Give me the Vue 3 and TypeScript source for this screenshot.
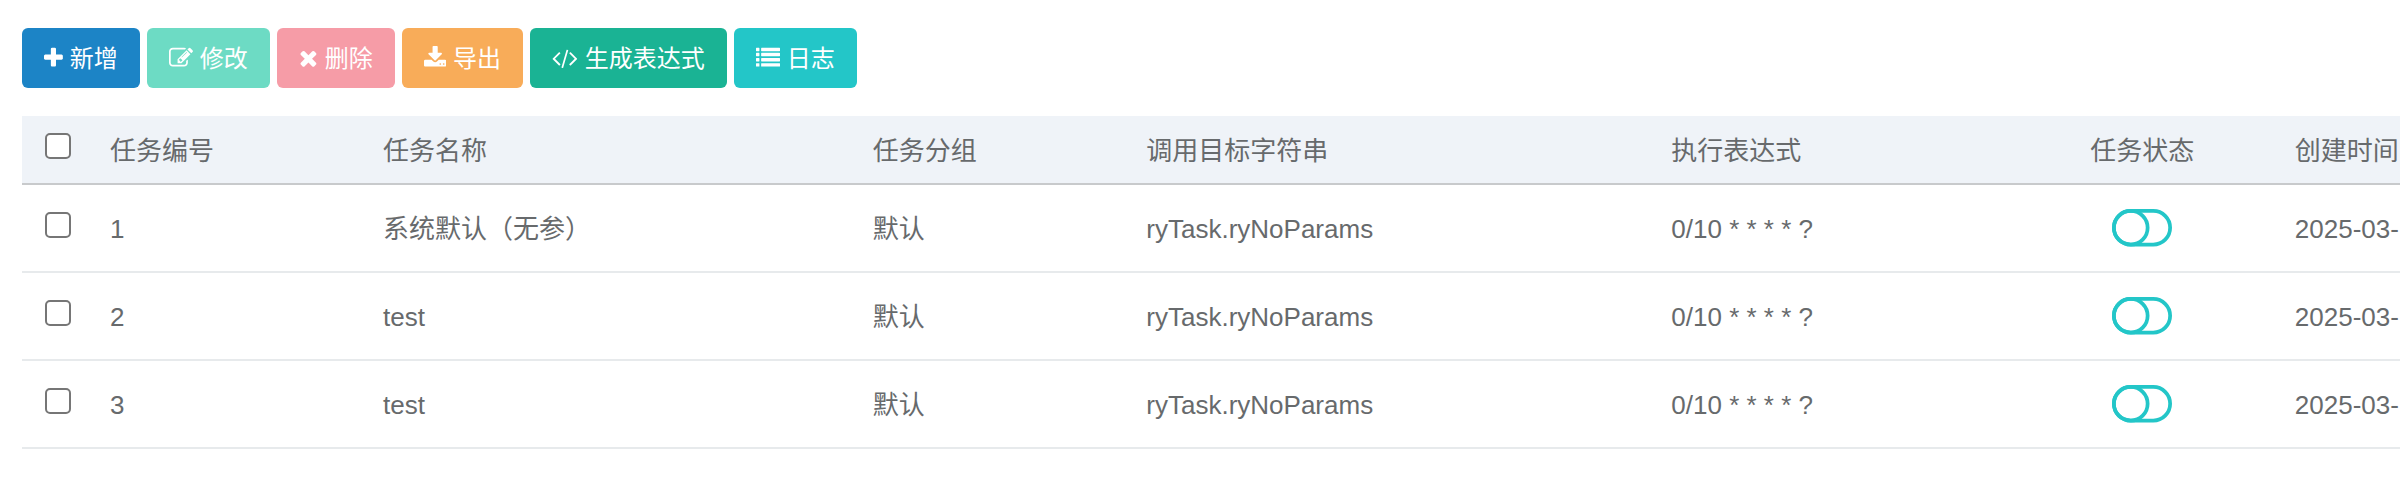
<script setup lang="ts">
import { ref } from 'vue'

interface Action {
  label: string
  tone: string
  viewBox: string
  path: string
}

interface Task {
  id: number
  name: string
  group: string
  target: string
  cron: string
  created: string
  enabled: boolean
}

const actions: Action[] = [
  {
    label: '新增',
    tone: 'primary',
    viewBox: '192 0 1408 1792',
    path: 'M1600 736v192q0 40-28 68t-68 28h-416v416q0 40-28 68t-68 28h-192q-40 0-68-28t-28-68v-416h-416q-40 0-68-28t-28-68v-192q0-40 28-68t68-28h416v-416q0-40 28-68t68-28h192q40 0 68 28t28 68v416h416q40 0 68 28t28 68z',
  },
  {
    label: '修改',
    tone: 'edit',
    viewBox: '0 0 1792 1792',
    path: 'M888 1184l116-116-152-152-116 116v56h96v96h56zm440-720q-16-16-33 1l-350 350q-17 17-1 33t33-1l350-350q17-17 1-33zm80 594v190q0 119-84.5 203.5t-203.5 84.5h-832q-119 0-203.5-84.5t-84.5-203.5v-832q0-119 84.5-203.5t203.5-84.5h832q63 0 117 25 15 7 18 23 3 17-9 29l-49 49q-14 14-32 8-23-6-45-6h-832q-66 0-113 47t-47 113v832q0 66 47 113t113 47h832q66 0 113-47t47-113v-126q0-13 9-22l64-64q15-15 35-7t20 29zm-96-738l288 288-672 672h-288v-288zm444 132l-92 92-288-288 92-92q28-28 68-28t68 28l152 152q28 28 28 68t-28 68z',
  },
  {
    label: '删除',
    tone: 'remove',
    viewBox: '192 0 1408 1792',
    path: 'M1490 1322q0 40-28 68l-136 136q-28 28-68 28t-68-28l-294-294-294 294q-28 28-68 28t-68-28l-136-136q-28-28-28-68t28-68l294-294-294-294q-28-28-28-68t28-68l136-136q28-28 68-28t68 28l294 294 294-294q28-28 68-28t68 28l136 136q28 28 28 68t-28 68l-294 294 294 294q28 28 28 68z',
  },
  {
    label: '导出',
    tone: 'export',
    viewBox: '64 0 1664 1792',
    path: 'M1344 1344q0-26-19-45t-45-19-45 19-19 45 19 45 45 19 45-19 19-45zm256 0q0-26-19-45t-45-19-45 19-19 45 19 45 45 19 45-19 19-45zm128-224v320q0 40-28 68t-68 28h-1472q-40 0-68-28t-28-68v-320q0-40 28-68t68-28h465l135 136q58 56 136 56t136-56l136-136h464q40 0 68 28t28 68zm-325-569q17 41-14 70l-448 448q-18 19-45 19t-45-19l-448-448q-31-29-14-70 17-39 59-39h256v-448q0-26 19-45t45-19h256q26 0 45 19t19 45v448h256q42 0 59 39z',
  },
  {
    label: '生成表达式',
    tone: 'cron',
    viewBox: '-64 0 1920 1792',
    path: 'M553 1399l-50 50q-10 10-23 10t-23-10l-466-466q-10-10-10-23t10-23l466-466q10-10 23-10t23 10l50 50q10 10 10 23t-10 23l-393 393 393 393q10 10 10 23t-10 23zm591-1067l-373 1291q-4 13-15.5 19.5t-23.5 2.5l-62-17q-13-4-19.5-15.5t-2.5-24.5l373-1291q4-13 15.5-19.5t23.5-2.5l62 17q13 4 19.5 15.5t2.5 24.5zm657 651l-466 466q-10 10-23 10t-23-10l-50-50q-10-10-10-23t10-23l393-393-393-393q-10-10-10-23t10-23l50-50q10-10 23-10t23 10l466 466q10 10 10 23t-10 23z',
  },
  {
    label: '日志',
    tone: 'log',
    viewBox: '0 0 1792 1792',
    path: 'M32 128h192q32 0 32 32v192q0 32-32 32h-192q-32 0-32-32v-192q0-32 32-32zM32 512h192q32 0 32 32v192q0 32-32 32h-192q-32 0-32-32v-192q0-32 32-32zM32 896h192q32 0 32 32v192q0 32-32 32h-192q-32 0-32-32v-192q0-32 32-32zM32 1280h192q32 0 32 32v192q0 32-32 32h-192q-32 0-32-32v-192q0-32 32-32zM416 128h1344q32 0 32 32v192q0 32-32 32h-1344q-32 0-32-32v-192q0-32 32-32zM416 512h1344q32 0 32 32v192q0 32-32 32h-1344q-32 0-32-32v-192q0-32 32-32zM416 896h1344q32 0 32 32v192q0 32-32 32h-1344q-32 0-32-32v-192q0-32 32-32zM416 1280h1344q32 0 32 32v192q0 32-32 32h-1344q-32 0-32-32v-192q0-32 32-32z',
  },
]

const tasks = ref<Task[]>([
  { id: 1, name: '系统默认（无参）', group: '默认', target: 'ryTask.ryNoParams', cron: '0/10 * * * * ?', created: '2025-03-', enabled: false },
  { id: 2, name: 'test', group: '默认', target: 'ryTask.ryNoParams', cron: '0/10 * * * * ?', created: '2025-03-', enabled: false },
  { id: 3, name: 'test', group: '默认', target: 'ryTask.ryNoParams', cron: '0/10 * * * * ?', created: '2025-03-', enabled: false },
])

const selected = ref<number[]>([])

function toggleAll(event: Event) {
  const checked = (event.target as HTMLInputElement).checked
  selected.value = checked ? tasks.value.map((t) => t.id) : []
}
</script>

<template>
  <main class="page">
    <div class="toolbar">
      <button v-for="a in actions" :key="a.tone" type="button" class="btn" :class="a.tone">
        <svg class="icon" :viewBox="a.viewBox" aria-hidden="true"><path :d="a.path" /></svg>
        <span class="label">{{ a.label }}</span>
      </button>
    </div>

    <table class="tasks">
      <colgroup>
        <col class="c-check" />
        <col class="c-id" />
        <col class="c-name" />
        <col class="c-group" />
        <col class="c-target" />
        <col class="c-cron" />
        <col class="c-status" />
        <col />
      </colgroup>
      <thead>
        <tr>
          <th class="check" scope="col">
            <input type="checkbox" aria-label="全选" :checked="selected.length === tasks.length" @change="toggleAll" />
          </th>
          <th scope="col">任务编号</th>
          <th scope="col">任务名称</th>
          <th scope="col">任务分组</th>
          <th scope="col">调用目标字符串</th>
          <th scope="col">执行表达式</th>
          <th scope="col" class="status">任务状态</th>
          <th scope="col">创建时间</th>
        </tr>
      </thead>
      <tbody>
        <tr v-for="t in tasks" :key="t.id">
          <td class="check">
            <input v-model="selected" type="checkbox" :value="t.id" :aria-label="`选择任务 ${t.id}`" />
          </td>
          <td>{{ t.id }}</td>
          <td>{{ t.name }}</td>
          <td>{{ t.group }}</td>
          <td>{{ t.target }}</td>
          <td>{{ t.cron }}</td>
          <td class="status">
            <button
              type="button"
              class="switch"
              role="switch"
              aria-label="任务状态"
              :aria-checked="t.enabled"
              @click="t.enabled = !t.enabled"
            >
              <svg viewBox="0 0 2048 1280" aria-hidden="true">
                <rect x="64" y="64" width="1920" height="1152" rx="576" />
                <circle :cx="t.enabled ? 1408 : 640" cy="640" r="576" />
              </svg>
            </button>
          </td>
          <td>{{ t.created }}</td>
        </tr>
      </tbody>
    </table>
  </main>
</template>

<style>
body {
  background: #fff;
}
</style>

<style scoped>
.page {
  padding: 28px 0 28px 22px;
  overflow: hidden;
  color: #676a6c;
  font: 26px/38px "Liberation Sans", "Noto Sans CJK SC", sans-serif;
}

.toolbar {
  display: flex;
  flex-wrap: wrap;
  gap: 7px;
  margin-bottom: 28px;
}

.btn {
  display: flex;
  align-items: center;
  gap: 7px;
  padding: 11px 22px;
  border: 0;
  border-radius: 6px;
  color: #fff;
  font: inherit;
  font-size: 24px;
  line-height: 36px;
  cursor: pointer;
}

.icon {
  height: 24px;
  fill: currentColor;
}

.label {
  padding-top: 2px;
}

.primary { background: #1c84c6; }
.edit { background: #6ddbc4; }
.remove { background: #f69ca7; }
.export { background: #f8ac59; }
.cron { background: #1ab394; }
.log { background: #23c6c8; }

.tasks {
  width: 100%;
  table-layout: fixed;
  border-collapse: separate;
  border-spacing: 0;
}

.c-check { width: 72px; }
.c-id { width: 11.48%; }
.c-name { width: 20.6%; }
.c-group { width: 11.5%; }
.c-target { width: 22.08%; }
.c-cron { width: 14.74%; }
.c-status { width: 11.48%; }

th,
td {
  padding: 25px 16px 23px;
  border-bottom: 2px solid #e7eaec;
  font-weight: 400;
  text-align: left;
  vertical-align: middle;
  white-space: nowrap;
}

th {
  padding-top: 16px;
  padding-bottom: 13px;
  background: #eff3f8;
  border-bottom-color: #c8cacc;
}

.status {
  text-align: center;
}

td.status,
td.check {
  padding-top: 24px;
  padding-bottom: 24px;
}

.check {
  padding-left: 0;
  padding-right: 0;
}

.check input {
  display: block;
  width: 26px;
  height: 26px;
  margin: 0 auto 6px 23px;
  appearance: none;
  border: 2px solid #767676;
  border-radius: 5px;
  background: #fff;
}

th.check input {
  margin-bottom: 10px;
}

.check input:checked {
  background: #1c84c6;
}

.switch {
  display: block;
  width: 60px;
  margin: 0 auto;
  padding: 0;
  border: 0;
  background: none;
  cursor: pointer;
}

.switch svg {
  display: block;
  width: 100%;
  fill: none;
  stroke: #23c6c8;
  stroke-width: 128;
}
</style>
